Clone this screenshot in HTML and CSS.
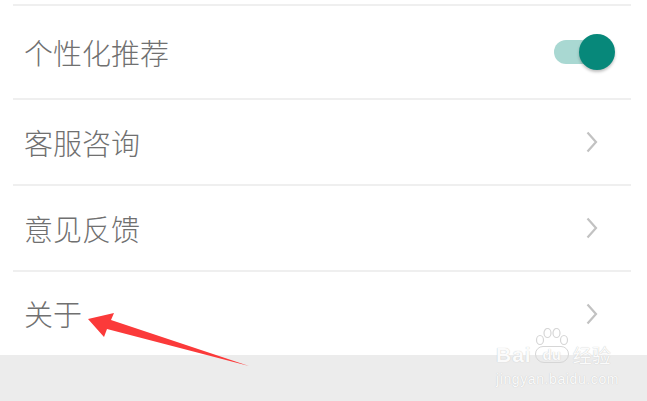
FILE: index.html
```html
<!DOCTYPE html>
<html>
    <head>
        <meta charset="utf-8">
        <link rel="stylesheet" href="styles.css">
    </head>
    <body>
        <div class="page">
            <div class="list">
                <div class="row first">
                    <span class="label">个性化推荐</span>
                    <div class="switch"><div class="knob"></div></div>
                </div>
                <div class="row">
                    <span class="label">客服咨询</span>
                    <svg class="chev" width="12" height="22" viewBox="0 0 12 22"><path d="M1.5 1.5 L10 11 L1.5 20.5" fill="none" stroke="#c2c2c2" stroke-width="2.2"/></svg>
                </div>
                <div class="row">
                    <span class="label">意见反馈</span>
                    <svg class="chev" width="12" height="22" viewBox="0 0 12 22"><path d="M1.5 1.5 L10 11 L1.5 20.5" fill="none" stroke="#c2c2c2" stroke-width="2.2"/></svg>
                </div>
                <div class="row last">
                    <span class="label">关于</span>
                    <svg class="chev" width="12" height="22" viewBox="0 0 12 22"><path d="M1.5 1.5 L10 11 L1.5 20.5" fill="none" stroke="#c2c2c2" stroke-width="2.2"/></svg>
                </div>
            </div>
            <div class="footer"></div>

            <!-- red pointer drawn over the screenshot -->
            <svg class="arrow" width="647" height="401" viewBox="0 0 647 401">
                <polygon points="88,319 114,313 111,320 249,366 107,329 104,337" fill="#fb3a3a"/>
            </svg>

            <div class="mark">
                <div class="mark-top">
                    <span class="bai">Bai</span>
                    <span class="paw">
                        <svg class="toes" width="34" height="18" viewBox="0 0 34 18">
                            <ellipse cx="5" cy="12" rx="3.5" ry="4.5" fill="none" stroke="#d6d6d6" stroke-width="1.2"/>
                            <ellipse cx="12.5" cy="5" rx="3.5" ry="4.5" fill="none" stroke="#d6d6d6" stroke-width="1.2"/>
                            <ellipse cx="21.5" cy="5" rx="3.5" ry="4.5" fill="none" stroke="#d6d6d6" stroke-width="1.2"/>
                            <ellipse cx="29" cy="12" rx="3.5" ry="4.5" fill="none" stroke="#d6d6d6" stroke-width="1.2"/>
                        </svg>
                        <span class="du">du</span>
                    </span>
                    <span class="jy">经验</span>
                </div>
                <div class="mark-url">jingyan.baidu.com</div>
            </div>
        </div>
    </body>
</html>
```

FILE: styles.css
```css
body{
    margin:0;
    background-color:#fff;
    font-family:"Noto Sans CJK SC","Noto Sans",sans-serif;
}

.page{
    position:relative;
    width:647px;
    height:401px;
    overflow:hidden;
    display:flex;
    flex-direction:column;
}

.list{
    margin:4px 16px 0 13px;
}

.row{
    display:flex;
    align-items:center;
    justify-content:space-between;
    height:84px;
    border-top:2px solid #efefef;
    padding:0 33px 0 11px;
}
.row.first{
    height:92px;
    padding-right:17px;
}
.row.last{
    height:83px;
}

.label{
    font-size:29px;
    font-weight:300;
    color:#707070;
    line-height:1;
}

.chev{
    display:block;
}

.switch{
    position:relative;
    width:56px;
    height:24px;
    border-radius:12px;
    background-color:#a9d8d2;
    margin-right:4px;
}
.knob{
    position:absolute;
    right:-5px;
    top:-6px;
    width:36px;
    height:36px;
    border-radius:50%;
    background-color:#07887a;
    box-shadow:0 2px 3px rgba(0,0,0,0.25);
}

.footer{
    flex:1;
    background-color:#ececec;
}

.arrow{
    position:absolute;
    left:0;
    top:0;
}

/* watermark */
.mark{
    position:absolute;
    left:496px;
    top:330px;
    color:#fbfbfb;
    text-shadow:0 0 1px #bdbdbd;
}
.mark-top{
    display:flex;
    align-items:flex-end;
    height:33px;
}
.bai{
    font-family:"Liberation Sans",Arial,sans-serif;
    font-size:21px;
    line-height:17px;
    font-weight:bold;
    letter-spacing:1px;
}
.paw{
    position:relative;
    margin-left:3px;
    width:34px;
    height:17px;
}
.toes{
    position:absolute;
    left:0;
    top:-18px;
}
.du{
    display:block;
    height:15px;
    border:1px solid #d6d6d6;
    border-radius:8px 8px 9px 9px;
    font-family:"Liberation Sans",Arial,sans-serif;
    font-size:15px;
    font-weight:bold;
    line-height:15px;
    text-align:center;
}
.jy{
    font-family:"Noto Sans CJK SC",sans-serif;
    font-size:19px;
    line-height:17px;
    margin-left:4px;
}
.mark-url{
    font-family:"Liberation Sans",Arial,sans-serif;
    font-size:14px;
    letter-spacing:0.6px;
    margin-top:8px;
}
```
